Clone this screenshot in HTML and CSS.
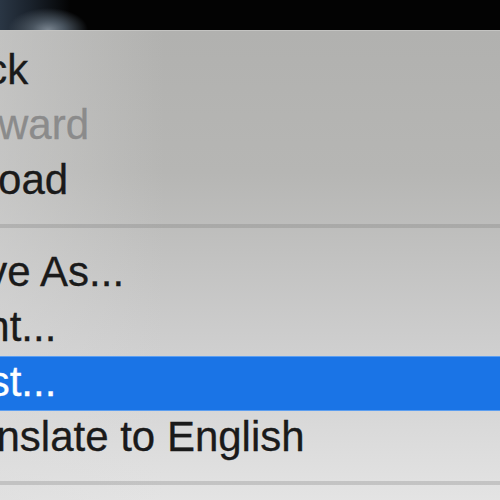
FILE: index.html
```html
<!DOCTYPE html>
<html>
<head>
<meta charset="utf-8">
<link rel="stylesheet" href="styles.css">
</head>
<body>
<div class="screen">
  <div class="topbar"></div>
  <div class="menu">
    <div class="item">Back</div>
    <div class="item disabled">Forward</div>
    <div class="item">Reload</div>
    <div class="sep"></div>
    <div class="item">Save As...</div>
    <div class="item">Print...</div>
    <div class="item active">Cast...</div>
    <div class="item">Translate to English</div>
    <div class="sep"></div>
  </div>
</div>
</body>
</html>
```

FILE: styles.css
```css
html, body {
  margin: 0;
  padding: 0;
  width: 500px;
  height: 500px;
  overflow: hidden;
}

.screen {
  width: 500px;
  height: 500px;
  display: flex;
  flex-direction: column;
  overflow: hidden;
  background: #000;
}

.topbar {
  height: 30px;
  flex: none;
  background:
    radial-gradient(ellipse 40px 22px at 48px 30px, #7a8590 0%, #4a5560 40%, rgba(20,28,36,0) 100%),
    linear-gradient(90deg, #2a3644 0px, #1a222c 30px, rgba(0,0,0,0) 70px),
    #030303;
}

.menu {
  flex: 1;
  margin-left: -65px;
  padding-top: 13px;
  border-top: 1px solid #c4c4c2;
  background:
    linear-gradient(90deg, rgba(220,220,220,0.55) 0px, rgba(220,220,220,0) 230px),
    linear-gradient(180deg, #b1b1af 0%, #b6b6b4 30%, #cdcdcd 65%, #e4e4e4 100%);
  font-family: "Liberation Sans", Arial, sans-serif;
  font-size: 42px;
  color: #1a1a1a;
  -webkit-text-stroke: 0.3px currentColor;
}

.item {
  height: 55px;
  line-height: 51px;
  white-space: nowrap;
}

.item.disabled {
  color: #8b8b8b;
}

.item.active {
  background: #1a74e6;
  color: #fff;
  box-shadow: inset 0 1px 0 #5c9ef0, inset 0 -1px 0 #5c9ef0;
}

.sep {
  height: 37px;
  padding-top: 15px;
  box-sizing: border-box;
}

.sep::after {
  content: "";
  display: block;
  height: 4px;
  background: rgba(120, 120, 120, 0.28);
}
```
